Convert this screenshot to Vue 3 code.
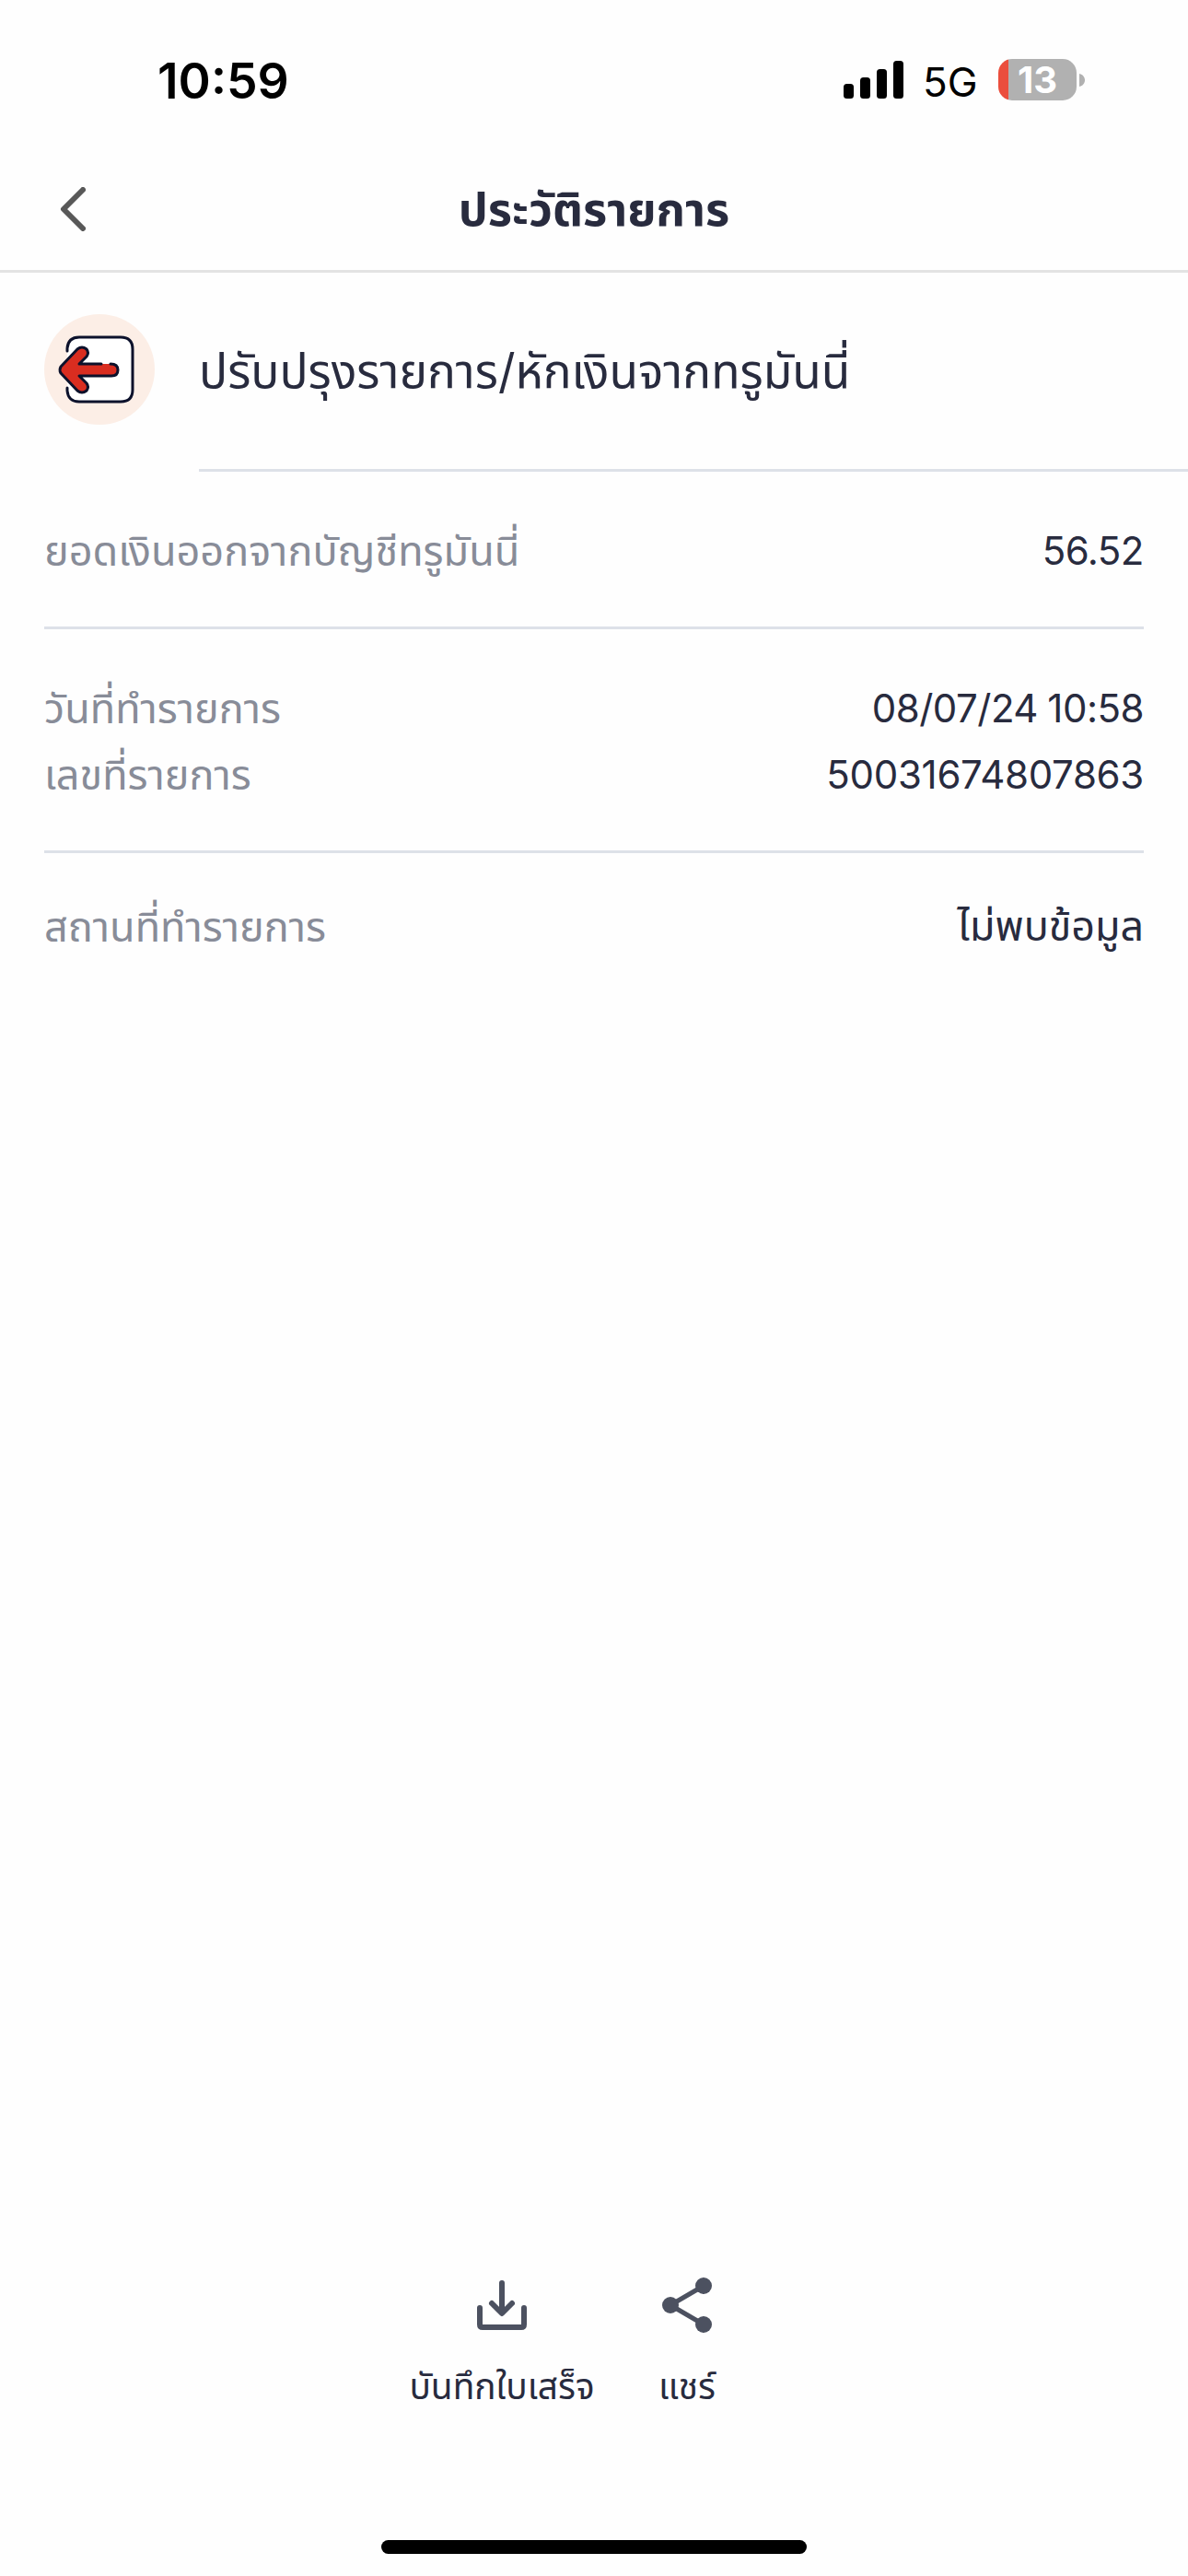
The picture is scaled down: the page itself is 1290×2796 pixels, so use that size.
<template>
    <div class="screen">
        <div class="status-bar">
            <span class="clock">10:59</span>
            <div class="status-right">
                <svg class="signal" viewBox="0 0 65 41">
                    <rect x="0" y="25" width="11" height="16" rx="3.5" />
                    <rect x="18" y="18" width="11" height="23" rx="3.5" />
                    <rect x="36" y="9" width="11" height="32" rx="3.5" />
                    <rect x="54" y="0" width="11" height="41" rx="3.5" />
                </svg>
                <span class="network">5G</span>
                <div class="battery"><span>13</span></div>
                <svg class="battery-tip" viewBox="0 0 6 14"><path d="M0 0C8 2 8 12 0 14Z" /></svg>
            </div>
        </div>

        <header class="nav">
            <svg class="back" viewBox="0 0 28 48">
                <path d="M25 3L4 24L25 45" />
            </svg>
            <h1>ประวัติรายการ</h1>
        </header>

        <section class="summary">
            <svg class="type-icon" viewBox="0 0 120 120">
                <circle cx="60" cy="60" r="60" fill="#fceee6" />
                <path d="M25 41V37Q25 25 38 25H83Q96 25 96 38V82Q96 95 83 95H38Q25 95 25 83V79" fill="#fff" />
                <path class="line" d="M25 40V37Q26 25 38 25H83Q96 25 96 38V82Q96 95 83 95H38Q26 95 25 83V80" />
                <path d="M38 54H73Q80 54 80 60.500Q80 67 73 67H38L46 75Q49 80 46 83Q41 87 36 84L18 64Q16 60.500 18 57L36 38Q41 34 46 39Q49 43 46 47Z" fill="#d92d20" />
                <path class="line" d="M62 54H38L46 46Q49 42 46 38Q41 34 36 38L18 57Q16 60.500 18 64L36 83Q41 87 46 83Q49 79 46 75L38 67H73Q80 67 80 60.500Q80 54 72 54" />
            </svg>
            <div class="summary-title">
                <span>ปรับปรุงรายการ/หักเงินจากทรูมันนี่</span>
            </div>
        </section>

        <section v-for="(group, index) in groups" :key="index" class="group" :class="group.name">
            <div v-for="row in group.rows" :key="row.label" class="row">
                <span class="label">{{ row.label }}</span>
                <span class="value" :class="row.key">{{ row.value }}</span>
            </div>
        </section>

        <footer class="actions">
            <div class="action save">
                <svg viewBox="0 0 72 72">
                    <path d="M36 12V44M25 34L36 45L47 34M12 39V57Q12 60 15 60H57Q60 60 60 57V39" />
                </svg>
                <span>บันทึกใบเสร็จ</span>
            </div>
            <div class="action share">
                <svg viewBox="0 0 72 72">
                    <path class="thin" d="M54 15L18 36L54 57" />
                    <circle cx="54" cy="15" r="9" />
                    <circle cx="18" cy="36" r="9" />
                    <circle cx="54" cy="57" r="9" />
                </svg>
                <span>แชร์</span>
            </div>
        </footer>
        <div class="home-indicator"></div>
    </div>
</template>

<script setup>
const groups = [
    { name: 'amount', rows: [{ key: 'total', label: 'ยอดเงินออกจากบัญชีทรูมันนี่', value: '56.52' }] },
    {
        name: 'detail',
        rows: [
            { key: 'date', label: 'วันที่ทำรายการ', value: '08/07/24 10:58' },
            { key: 'number', label: 'เลขที่รายการ', value: '50031674807863' },
        ],
    },
    { name: 'place', rows: [{ key: 'location', label: 'สถานที่ทำรายการ', value: 'ไม่พบข้อมูล' }] },
]
</script>

<style>
body {
    background: #fefefe;
}
</style>

<style scoped>
.screen {
    width: 1290px;
    height: 2796px;
    box-sizing: border-box;
    display: flex;
    flex-direction: column;
    overflow: hidden;
    background: #fefefe;
    color: #282b3e;
    font-family: Inter, "Noto Sans Thai", "Noto Sans", sans-serif;
    white-space: nowrap;
}

.status-bar {
    height: 175px;
    flex: none;
    box-sizing: border-box;
    padding: 0 112px 0 171px;
    display: flex;
    justify-content: space-between;
    color: #000;
}

.clock {
    font-size: 53.5px;
    font-weight: 600;
    line-height: 175px;
}

.status-right {
    display: flex;
    align-items: center;
    height: 173px;
}

.signal {
    width: 65px;
    height: 41px;
    margin-right: 21px;
}

.network {
    font-size: 44px;
    line-height: 60px;
    margin-top: 4px;
    width: 59px;
    margin-right: 23px;
}

.battery {
    width: 85px;
    height: 45px;
    border-radius: 15px;
    background: linear-gradient(90deg, #eb4e3d 11px, #b1b1b1 11px);
    color: #fff;
    font-size: 40px;
    font-weight: 700;
    line-height: 46px;
    text-align: center;
}

.battery-tip {
    width: 6px;
    height: 14px;
    margin-left: 3px;
    fill: #b1b1b1;
}

.nav {
    height: 121px;
    flex: none;
    box-sizing: border-box;
    border-bottom: 3px solid #e3e3e3;
    display: grid;
    grid-template-columns: 66px 1fr 66px;
}

.back {
    width: 28px;
    height: 48px;
    margin: 28px 0 0 65px;
    fill: none;
    stroke: #585858;
    stroke-width: 6;
    stroke-linecap: round;
    stroke-linejoin: round;
}

h1 {
    margin: 0;
    font-size: 50.5px;
    font-weight: 700;
    line-height: 104px;
    text-align: center;
}

.summary {
    height: 216px;
    flex: none;
    display: flex;
    padding-left: 48px;
}

.type-icon {
    width: 120px;
    height: 120px;
    flex: none;
    margin: 45px 48px 0 0;
}

.line {
    fill: none;
    stroke: #0c112b;
    stroke-width: 3;
    stroke-linecap: round;
    stroke-linejoin: round;
}

.summary-title {
    flex: 1;
    border-bottom: 3px solid #dde1e8;
    font-size: 51.5px;
    line-height: 213px;
}

.group {
    margin: 0 48px;
    box-sizing: border-box;
    flex: none;
    border-bottom: 3px solid #dde1e8;
    font-size: 45px;
}

.row {
    display: flex;
    justify-content: space-between;
    height: 72px;
    line-height: 71px;
}

.label {
    color: #888c98;
}

.amount {
    height: 171px;
    padding-top: 50px;
}

.detail {
    height: 243px;
    padding-top: 50px;
}

.place {
    padding-top: 44px;
    border: none;
}

.value {
    font-size: 42px;
    line-height: 72px;
    letter-spacing: -0.5px;
}

.date {
    word-spacing: -1px;
}

.number {
    letter-spacing: -0.3px;
}

.location {
    font-size: 44.8px;
    letter-spacing: 0;
    line-height: 71px;
}

.actions {
    display: flex;
    margin-top: auto;
    height: 291px;
    padding-left: 445px;
}

.action {
    display: flex;
    flex-direction: column;
    align-items: center;
    font-size: 38.8px;
    line-height: 60px;
}

.action svg {
    width: 72px;
    height: 72px;
    margin-bottom: 22px;
    fill: none;
    stroke: #4c5160;
    stroke-width: 6;
    stroke-linecap: round;
    stroke-linejoin: round;
}

.action circle {
    fill: #4c5160;
    stroke: none;
}

.action .thin {
    stroke-width: 5;
}

.save {
    width: 200px;
}

.share {
    width: 60px;
    margin-left: 71px;
}

.home-indicator {
    width: 462px;
    height: 15px;
    flex: none;
    margin: 0 auto 24px;
    border-radius: 8px;
    background: #000;
}
</style>
